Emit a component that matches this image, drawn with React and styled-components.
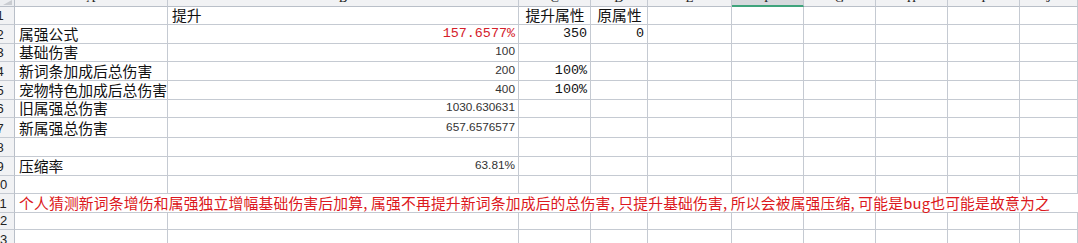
import React from "react";
import styled, { createGlobalStyle } from "styled-components";

const COLS = [153, 351, 72, 57, 84, 72, 72, 72, 72];
const LETTERS = ["A", "B", "C", "D", "E", "F", "G", "H", "I", "J"];
const HEIGHTS = [18, 19, 18, 19, 19, 18, 20, 19, 19, 18, 19, 17, 19];

// each row: cells by column index; a = align, f = font kind, t = tone
const ROWS = [
  { 1: { v: "提升" }, 2: { v: "提升属性", a: "center" }, 3: { v: "原属性", a: "center" } },
  {
    0: { v: "属强公式" },
    1: { v: "157.6577%", a: "right", f: "mono", t: "red" },
    2: { v: "350", a: "right", f: "mono" },
    3: { v: "0", a: "right", f: "mono" },
  },
  { 0: { v: "基础伤害" }, 1: { v: "100", a: "right", f: "num" } },
  { 0: { v: "新词条加成后总伤害" }, 1: { v: "200", a: "right", f: "num" }, 2: { v: "100%", a: "right", f: "mono" } },
  { 0: { v: "宠物特色加成后总伤害" }, 1: { v: "400", a: "right", f: "num" }, 2: { v: "100%", a: "right", f: "mono" } },
  { 0: { v: "旧属强总伤害" }, 1: { v: "1030.630631", a: "right", f: "num" } },
  { 0: { v: "新属强总伤害" }, 1: { v: "657.6576577", a: "right", f: "num" } },
  {},
  { 0: { v: "压缩率" }, 1: { v: "63.81%", a: "right", f: "num" } },
  {},
  {
    note:
      "个人猜测新词条增伤和属强独立增幅基础伤害后加算, 属强不再提升新词条加成后的总伤害, 只提升基础伤害, 所以会被属强压缩, 可能是bug也可能是故意为之",
  },
  {},
  {},
];

const GlobalStyle = createGlobalStyle`
  html, body {
    margin: 0;
    background: #ffffff;
    overflow: hidden;
  }
`;

const Sheet = styled.div`
  display: grid;
  grid-template-columns: 15px ${COLS.map((w) => `${w}px`).join(" ")} 1fr;
  grid-template-rows: 7px ${HEIGHTS.map((h) => `${h}px`).join(" ")};
  width: 1078px;
  height: 243px;
  overflow: hidden;
  background: #fff;
  font-family: "Noto Sans CJK SC", "Liberation Sans", sans-serif;
`;

const Corner = styled.div`
  position: relative;
  background: #eceef1;
  border-right: 1px solid #b9bfc8;
  border-bottom: 1px solid #b9bfc8;
  box-sizing: border-box;

  &::after {
    content: "";
    position: absolute;
    right: 2px;
    bottom: 1px;
    border-left: 9px solid transparent;
    border-bottom: 5px solid #c9ccd1;
  }
`;

const ColHead = styled.div`
  box-sizing: border-box;
  display: flex;
  align-items: flex-end;
  justify-content: center;
  overflow: hidden;
  background: ${(p) => (p.$active ? "#d6d9dd" : "#f1f2f4")};
  border-right: 1px solid #c5cad2;
  border-bottom: ${(p) => (p.$active ? "2px solid #3fa37c" : "1px solid #b9bfc8")};
  font-family: "Liberation Serif", serif;
  font-size: 13px;
  line-height: 13px;
  color: #222;

  span {
    margin-bottom: ${(p) => (p.$active ? "1px" : "2px")};
  }
`;

const RowHead = styled.div`
  box-sizing: border-box;
  display: flex;
  align-items: flex-end;
  justify-content: flex-end;
  overflow: hidden;
  background: #f1f2f4;
  border-right: 1px solid #b9bfc8;
  border-bottom: 1px solid #c5cad2;
  font-family: "Liberation Sans", sans-serif;
  font-size: 13px;
  color: #222;

  span {
    flex: none;
    width: 28px;
    text-align: center;
    line-height: 15px;
    margin-bottom: 1px;
  }
`;

const fonts = {
  text: `font-family: "Noto Sans CJK SC", sans-serif; font-size: 14.8px;`,
  mono: `font-family: "Liberation Mono", monospace; font-size: 13.4px;`,
  num: `font-family: "Liberation Sans", sans-serif; font-size: 11.8px;`,
};

const Cell = styled.div`
  box-sizing: border-box;
  display: flex;
  align-items: flex-end;
  justify-content: ${(p) =>
    p.$align === "right" ? "flex-end" : p.$align === "center" ? "center" : "flex-start"};
  padding: 0 3px 1px 4px;
  white-space: nowrap;
  overflow: visible;
  border-right: 1px solid #c5cad2;
  border-bottom: 1px solid #c5cad2;
  color: ${(p) => (p.$tone === "red" ? "#d4202a" : p.$font === "num" ? "#333" : "#111")};
  ${(p) => fonts[p.$font || "text"]}
  line-height: 17px;
`;

const Note = styled(Cell)`
  grid-column: 2 / span 10;
  color: #dc1820;
  font-size: 14.8px;
  letter-spacing: 0.17px;
  border-right: none;
`;

export default function App() {
  return (
    <>
      <GlobalStyle />
      <Sheet>
        <Corner />
        {LETTERS.map((l) => (
          <ColHead key={l} $active={l === "F"}>
            <span>{l}</span>
          </ColHead>
        ))}
        {ROWS.map((row, r) => (
          <React.Fragment key={r}>
            <RowHead>
              <span>{r + 1}</span>
            </RowHead>
            {row.note ? (
              <Note>{row.note}</Note>
            ) : (
              LETTERS.map((_, c) => {
                const cell = row[c];
                return (
                  <Cell key={c} $align={cell?.a} $font={cell?.f} $tone={cell?.t}>
                    {cell?.v}
                  </Cell>
                );
              })
            )}
          </React.Fragment>
        ))}
      </Sheet>
    </>
  );
}
